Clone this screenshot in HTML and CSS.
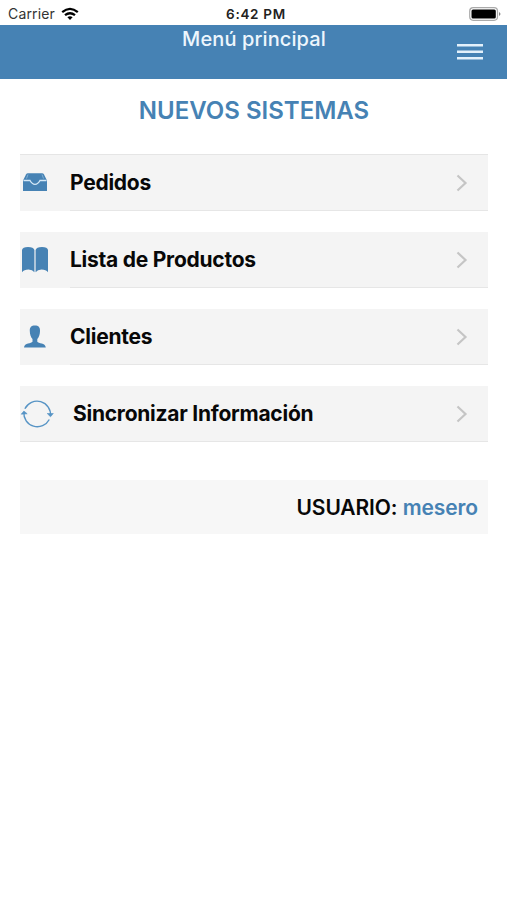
FILE: index.html
```html
<!DOCTYPE html>
<html lang="es">
<head>
<meta charset="utf-8">
<title>Menú principal</title>
<link rel="stylesheet" href="styles.css">
</head>
<body>
<div class="status">
  <div class="carrier"><span class="carrier-name">Carrier</span>
    <svg class="wifi" width="18" height="14" viewBox="0 0 18 14" fill="none" stroke="#000" stroke-width="2.3"><path d="M1.2 5.1Q9-1.3 16.8 5.1M4 8.2Q9 4.2 14 8.2"/><path d="M6.4 10.2Q9 8.2 11.6 10.2L9 13Z" fill="#000" stroke="none"/></svg>
  </div>
  <span class="time">6:42 PM</span>
  <svg class="battery" width="33" height="14" viewBox="0 0 33 14"><rect x=".7" y=".7" width="27.8" height="12.6" rx="3.5" fill="#fff" stroke="#aaa" stroke-width="1.2"/><rect x="2.5" y="2.5" width="24.3" height="9" rx="1.5"/><path d="M30 5Q33 7 30 9Z" fill="#888"/></svg>
</div>
<header class="navbar">
  <h1 class="nav-title">Menú principal</h1>
  <svg class="burger" width="26" height="16" viewBox="0 0 26 16" fill="#e4f1fb"><path d="M0 0h26v2.4H0zM0 6.6h26V9H0zM0 13h26v2.4H0z"/></svg>
</header>
<main class="content">
  <h2 class="company">NUEVOS SISTEMAS</h2>
  <nav class="menu">
    <a class="item first">
      <svg class="icon" width="36" height="36" viewBox="0 0 36 36"><path d="M6 9.500Q6.600 8.300 8 8.300H22Q23.400 8.300 24 9.500L27 15.500V26H3V15.500Z" fill="#4682b4"/><path d="M3.500 15.500H10Q12 19.300 15 19.300T20 15.500H26.500" fill="none" stroke="#d4e8f7" stroke-width="1.300"/><path d="M8 9.500L6.500 13.500M22 9.500L23.500 13.500" fill="none" stroke="#8fb9d9" stroke-width=".8"/></svg>
      <span class="label">Pedidos</span>
      <svg class="chevron" width="12" height="18" viewBox="0 0 12 18"><path d="M1.500 1.500L9.500 9L1.500 16.500"/></svg>
    </a>
    <a class="item">
      <svg class="icon" width="36" height="36" viewBox="0 0 36 36" fill="#4682b4"><path d="M2 8Q2.500 5 8 5Q13.600 5 14.400 8V30.200Q12.500 27.600 8.500 27.600Q4 27.600 2 30.200Z"/><path d="M15.600 8Q16.400 5 22 5Q27.500 5 28 8V30.200Q26 27.600 21.500 27.600Q17.500 27.600 15.600 30.200Z"/></svg>
      <span class="label">Lista de Productos</span>
      <svg class="chevron" width="12" height="18" viewBox="0 0 12 18"><path d="M1.500 1.500L9.500 9L1.500 16.500"/></svg>
    </a>
    <a class="item">
      <svg class="icon" width="36" height="36" viewBox="0 0 36 36" fill="#4682b4"><path d="M14.900 6.500C11.300 6.500 9.600 8.300 9.800 12C9.900 15.500 10.700 18 12.500 20V22.700C11.500 24.700 4.300 23.500 4 28.500H25.800C25.500 23.500 18.300 24.700 17.300 22.700V20C19.100 18 19.900 15.500 20 12C20.200 8.300 18.500 6.500 14.900 6.500Z"/></svg>
      <span class="label">Clientes</span>
      <svg class="chevron" width="12" height="18" viewBox="0 0 12 18"><path d="M1.500 1.500L9.500 9L1.500 16.500"/></svg>
    </a>
    <a class="item sync">
      <svg class="icon" width="36" height="36" viewBox="0 0 36 36" fill="none" stroke="#5794c5" stroke-width="1.400"><path d="M4.900 12.800A13.500 13.500 0 0 1 30.500 20M29.300 23.500A13.500 13.500 0 0 1 3.900 16"/><path d="M1.200 18.200L3.900 15L7.200 17.800ZM27.200 17.500L30.500 20.800L33.300 17.500Z" fill="#5794c5" stroke-width=".6"/></svg>
      <span class="label">Sincronizar Información</span>
      <svg class="chevron" width="12" height="18" viewBox="0 0 12 18"><path d="M1.500 1.500L9.500 9L1.500 16.500"/></svg>
    </a>
  </nav>
  <div class="user"><span class="user-label">USUARIO:</span> <span class="user-name">mesero</span></div>
</main>
</body>
</html>
```
FILE: styles.css
```css
body {
  margin: 0;
  min-height: 900px;
  background: #fff;
  color: #080808;
  font-family: Inter, "Liberation Sans", sans-serif;
}
h1, h2 { margin: 0; }
svg { display: block; flex: none; }
.status {
  height: 25px;
  box-sizing: border-box;
  padding: 2px 5px 0 8px;
  display: grid;
  grid-template-columns: 1fr auto 1fr;
  align-items: center;
}
.carrier {
  display: flex;
  align-items: center;
  gap: 6px;
  font-size: 14px;
  color: #333;
}
.carrier-name { letter-spacing: 0.15px; }
.time { font-size: 13.5px; letter-spacing: 0.7px; margin-left: 2px; font-weight: 600; color: #222; }
.battery { justify-self: end; }
.navbar {
  height: 54px;
  background: #4682b4;
  display: grid;
  grid-template-columns: 1fr auto 1fr;
  padding: 0 24px 0 25px;
}
.nav-title {
  grid-column: 2;
  font-size: 20px;
  line-height: 29px;
  font-weight: 500;
  letter-spacing: 0.1px;
  color: #edf6fd;
}
.burger { justify-self: end; align-self: center; }
.content { padding: 0 19px 0 20px; }
.company {
  height: 75px;
  line-height: 63px;
  text-align: center;
  font-size: 24px;
  font-weight: 600;
  color: #4682b4;
}
.menu { display: flex; flex-direction: column; gap: 21px; }
.item {
  height: 56px;
  box-sizing: border-box;
  display: flex;
  align-items: center;
  background:
    linear-gradient(#e6e6e6, #e6e6e6) 50px 100% / 100% 1px no-repeat,
    #f4f4f4;
}
.first { height: 57px; box-shadow: inset 0 1px #e5e5e5; }
.icon { width: 36px; margin-right: 14px; }
.sync .icon { margin-right: 17px; }
.sync { background-position: 0 100%, 0 0; }
.label {
  flex: 1;
  font-size: 21px;
  line-height: 28px;
  font-weight: 650;
  letter-spacing: -0.25px;
  white-space: nowrap;
}
.chevron {
  margin-right: 20px;
  fill: none;
  stroke: #c5c5c5;
  stroke-width: 2.2;
}
.user {
  margin-top: 38px;
  height: 54px;
  line-height: 56px;
  box-sizing: border-box;
  padding-right: 10px;
  text-align: right;
  background: #f7f7f7;
  font-size: 21px;
  font-weight: 600;
  letter-spacing: -0.1px;
}
.user-name { color: #4682b4; }
```
